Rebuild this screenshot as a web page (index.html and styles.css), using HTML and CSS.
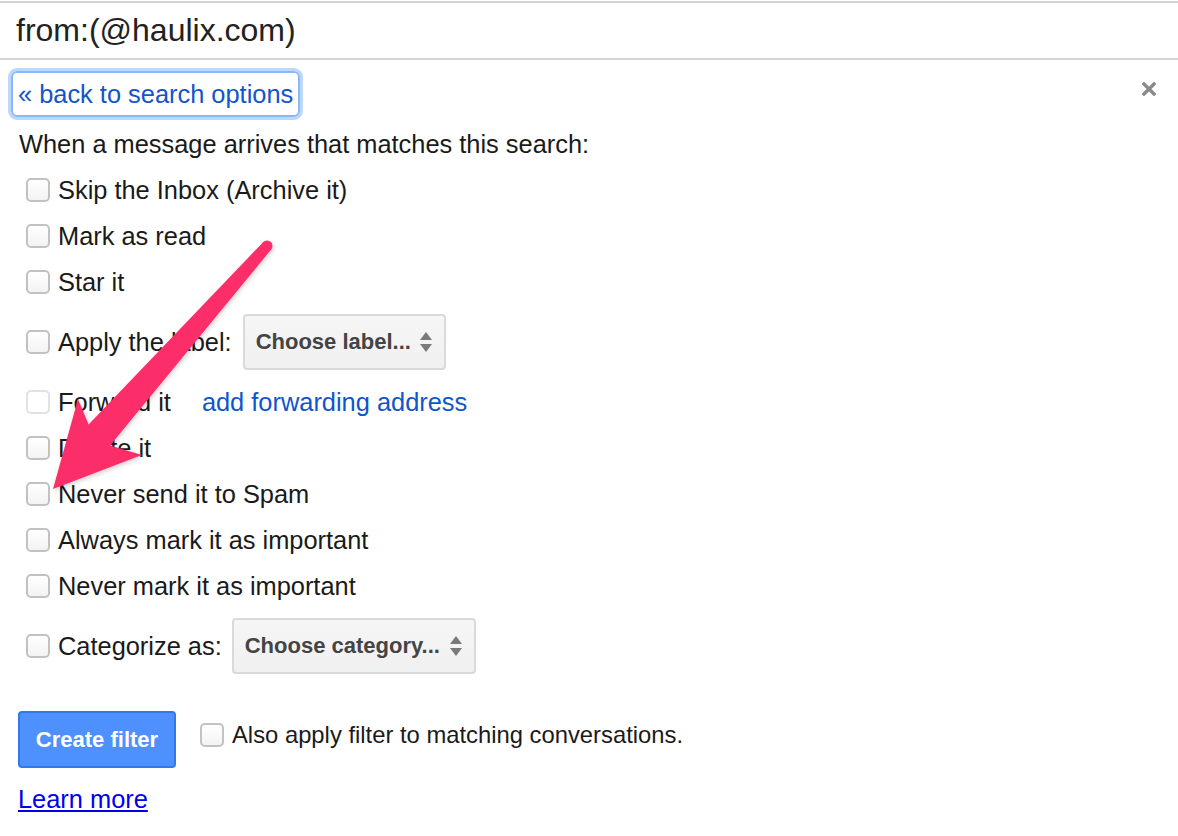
FILE: index.html
```html
<!DOCTYPE html>
<html lang="en">
<head>
  <meta charset="UTF-8">
  <title>Create filter</title>
  <link rel="stylesheet" href="styles.css">
</head>
<body>
  <div class="search-box">from:(@haulix.com)</div>

  <div class="filter-panel">
    <div class="top-row">
      <a class="back-link" href="#">« back to search options</a>
      <svg class="close" width="14" height="14" viewBox="0 0 14 14">
        <path d="M2 2 L12 12 M12 2 L2 12" stroke="#8a8a8a" stroke-width="3.4" stroke-linecap="square"/>
      </svg>
    </div>

    <div class="intro">When a message arrives that matches this search:</div>

    <div class="row"><input type="checkbox" class="cb"><span>Skip the Inbox (Archive it)</span></div>
    <div class="row"><input type="checkbox" class="cb"><span>Mark as read</span></div>
    <div class="row"><input type="checkbox" class="cb"><span>Star it</span></div>
    <div class="row has-select">
      <input type="checkbox" class="cb"><span>Apply the label:</span>
      <div class="select select-label">
        <span>Choose label...</span>
        <svg width="14" height="22" viewBox="0 0 14 22"><path d="M7 1 L13 9 L1 9 Z M1 13 L13 13 L7 21 Z" fill="#7a7a7a"/></svg>
      </div>
    </div>
    <div class="row"><input type="checkbox" class="cb" disabled><span>Forward it</span><a class="fwd-link" href="#">add forwarding address</a></div>
    <div class="row"><input type="checkbox" class="cb"><span>Delete it</span></div>
    <div class="row"><input type="checkbox" class="cb"><span>Never send it to Spam</span></div>
    <div class="row"><input type="checkbox" class="cb"><span>Always mark it as important</span></div>
    <div class="row"><input type="checkbox" class="cb"><span>Never mark it as important</span></div>
    <div class="row has-select">
      <input type="checkbox" class="cb"><span>Categorize as:</span>
      <div class="select select-category">
        <span>Choose category...</span>
        <svg width="14" height="22" viewBox="0 0 14 22"><path d="M7 1 L13 9 L1 9 Z M1 13 L13 13 L7 21 Z" fill="#7a7a7a"/></svg>
      </div>
    </div>

    <div class="actions">
      <button class="create-btn">Create filter</button>
      <label class="also"><input type="checkbox" class="cb"><span>Also apply filter to matching conversations.</span></label>
    </div>

    <a class="learn-more" href="#">Learn more</a>
  </div>

  <!-- annotation arrow drawn over the form -->
  <svg class="annotation" width="1178" height="836" viewBox="0 0 1178 836">
    <defs>
      <filter id="shadow" x="-10%" y="-10%" width="120%" height="120%">
        <feDropShadow dx="1" dy="2" stdDeviation="2" flood-color="#000" flood-opacity="0.18"/>
      </filter>
    </defs>
    <g fill="#fc2e6a" filter="url(#shadow)">
      <polygon points="53,489 78,399 88.6,424.4 262.9,242.4 271.1,249.6 110.1,445.4 142,455"/>
      <circle cx="267" cy="246" r="5.5"/>
    </g>
  </svg>
</body>
</html>
```

FILE: styles.css
```css
body {
  margin: 0;
  font-family: "Liberation Sans", Arial, sans-serif;
  color: #1a1a1a;
  background: #fff;
  position: relative;
  width: 1178px;
  height: 836px;
  overflow: hidden;
}

.search-box {
  margin-top: 1px;
  height: 55px;
  border-top: 2px solid #d3d3d3;
  border-bottom: 2px solid #d3d3d3;
  padding-left: 16px;
  font-size: 32px;
  line-height: 55px;
  color: #222;
}

.filter-panel {
  padding: 11px 0 0 18px;
}

.top-row {
  display: flex;
  justify-content: space-between;
  align-items: flex-start;
  height: 46px;
  margin-bottom: 4px;
}

.back-link {
  margin-left: -7px;
  display: inline-block;
  height: 42px;
  line-height: 42px;
  padding: 0 5px;
  border: 2px solid #8ab8f6;
  border-radius: 6px;
  box-shadow: 0 0 0 3px #bcd8fb;
  font-size: 25.4px;
  color: #1155cc;
  text-decoration: none;
}

.close {
  margin-top: 11px;
  margin-right: 22px;
}

.intro {
  height: 46px;
  line-height: 46px;
  padding-left: 1px;
  font-size: 25.4px;
}

.row {
  display: flex;
  align-items: center;
  height: 46px;
  padding-left: 8px;
  font-size: 25.4px;
}

.row.has-select {
  height: 74px;
}

.cb {
  appearance: none;
  -webkit-appearance: none;
  width: 24px;
  height: 24px;
  margin: 0 8px 0 0;
  box-sizing: border-box;
  border: 2px solid #c2c2c2;
  border-radius: 5px;
  background: linear-gradient(#fff, #f3f3f3);
  flex-shrink: 0;
}

.cb:disabled {
  border-color: #e2e2e2;
  background: #fff;
}

.fwd-link {
  margin-left: 31px;
  color: #1155cc;
  text-decoration: none;
}

.select {
  display: inline-flex;
  align-items: center;
  justify-content: space-between;
  box-sizing: border-box;
  height: 56px;
  padding: 0 11px 0 11px;
  border: 2px solid #dadada;
  border-radius: 4px;
  background: linear-gradient(#f6f6f6, #f0f0f0);
  font-size: 22px;
  font-weight: bold;
  color: #444;
}

.select-label {
  width: 203px;
  margin-left: 11px;
}

.select-category {
  width: 244px;
  margin-left: 10px;
}

.actions {
  display: flex;
  align-items: flex-start;
  margin-top: 28px;
}

.create-btn {
  width: 158px;
  height: 57px;
  border: 2px solid #3079ed;
  border-radius: 4px;
  background: #4d90fe;
  color: #fff;
  font-family: "Liberation Sans", Arial, sans-serif;
  font-size: 22px;
  font-weight: bold;
  cursor: pointer;
}

.also {
  display: flex;
  align-items: center;
  margin: 10px 0 0 24px;
  font-size: 23.8px;
}

.learn-more {
  display: inline-block;
  margin-top: 16px;
  font-size: 25.4px;
  line-height: 30px;
  color: #0000ee;
  text-decoration: underline;
}

.annotation {
  position: absolute;
  left: 0;
  top: 0;
  pointer-events: none;
}
```
